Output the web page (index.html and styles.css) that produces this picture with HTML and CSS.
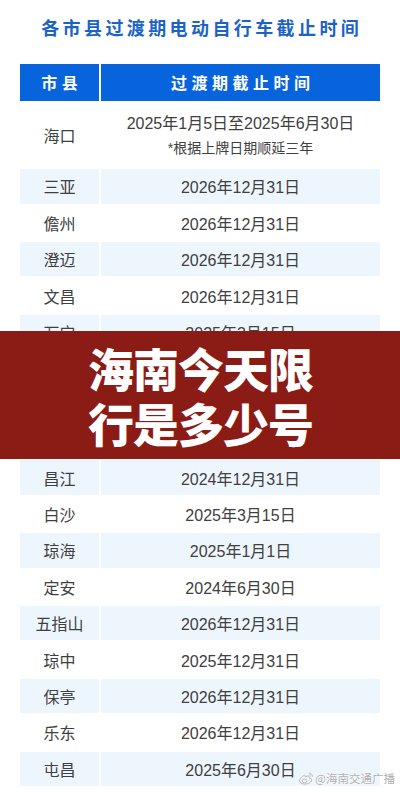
FILE: index.html
```html
<!DOCTYPE html>
<html lang="zh-CN">
<head>
<meta charset="utf-8">
<title>各市县过渡期电动自行车截止时间</title>
<link rel="stylesheet" href="styles.css">
</head>
<body>
<div class="page">
  <h1 class="title">各市县过渡期电动自行车截止时间</h1>
  <div class="table">
    <div class="row head">
      <div class="cell"><span class="sp">市县</span></div>
      <div class="cell"><span class="sp">过渡期截止时间</span></div>
    </div>
    <div class="row tall">
      <div class="cell">海口</div>
      <div class="cell stack">
        <span>2025年1月5日至2025年6月30日</span>
        <span class="note">*根据上牌日期顺延三年</span>
      </div>
    </div>
    <div class="row alt"><div class="cell">三亚</div><div class="cell">2026年12月31日</div></div>
    <div class="row"><div class="cell">儋州</div><div class="cell">2026年12月31日</div></div>
    <div class="row alt"><div class="cell">澄迈</div><div class="cell">2026年12月31日</div></div>
    <div class="row"><div class="cell">文昌</div><div class="cell">2026年12月31日</div></div>
    <div class="row alt"><div class="cell">万宁</div><div class="cell">2025年3月15日</div></div>
    <div class="row covered"><div class="cell">东方</div><div class="cell">2025年12月31日</div></div>
    <div class="row alt covered"><div class="cell">陵水</div><div class="cell">2025年12月31日</div></div>
    <div class="row covered"><div class="cell">临高</div><div class="cell">2025年12月31日</div></div>
    <div class="row alt"><div class="cell">昌江</div><div class="cell">2024年12月31日</div></div>
    <div class="row"><div class="cell">白沙</div><div class="cell">2025年3月15日</div></div>
    <div class="row alt"><div class="cell">琼海</div><div class="cell">2025年1月1日</div></div>
    <div class="row"><div class="cell">定安</div><div class="cell">2024年6月30日</div></div>
    <div class="row alt"><div class="cell">五指山</div><div class="cell">2026年12月31日</div></div>
    <div class="row"><div class="cell">琼中</div><div class="cell">2025年12月31日</div></div>
    <div class="row alt"><div class="cell">保亭</div><div class="cell">2026年12月31日</div></div>
    <div class="row"><div class="cell">乐东</div><div class="cell">2026年12月31日</div></div>
    <div class="row alt"><div class="cell">屯昌</div><div class="cell">2025年6月30日</div></div>
  </div>

  <div class="banner">
    <div class="banner-text">海南今天限<br>行是多少号</div>
  </div>

  <div class="watermark">
    <svg class="wb" width="16" height="13" viewBox="0 0 16 13">
      <path d="M6.5 3.2C3.6 4.6 1.2 7 1.6 9.1c.4 2.2 3.600 3.4 7 2.8 3.3-.6 5.4-2.6 4.9-4.4-.3-1.200-1.6-1.500-2.500-1.300.4-.9.3-1.7-.4-2-.9-.4-2.4.1-3.5.8.3-.9.2-1.9-.6-1.8z" fill="none" stroke="#b8b8b8" stroke-width="1"/>
      <ellipse cx="6.6" cy="8.9" rx="2.4" ry="1.8" fill="none" stroke="#b8b8b8" stroke-width="0.9"/>
      <path d="M11.2 1.2c1.8-.2 3.4 1.2 3.3 3.1M11.4 2.9c.8-.1 1.5.5 1.4 1.3" fill="none" stroke="#b8b8b8" stroke-width="0.9" stroke-linecap="round"/>
    </svg>
    <span>@海南交通广播</span>
  </div>
</div>
</body>
</html>
```

FILE: styles.css
```css
html, body {
  margin: 0;
  padding: 0;
  background: #ffffff;
}

body {
  font-family: "Liberation Sans", "Noto Sans CJK SC", sans-serif;
  color: #404040;
  overflow: hidden;
}

.page {
  position: relative;
  width: 400px;
  height: 790px;
  overflow: hidden;
}

.title {
  margin: 0;
  padding-top: 16px;
  box-sizing: border-box;
  line-height: 22px;
  height: 64px;
  text-align: center;
  font-size: 18px;
  font-weight: 700;
  letter-spacing: 3.4px;
  text-indent: 3.4px;
  color: #1b63c6;
  font-family: "Noto Sans CJK SC", sans-serif;
}

.table {
  margin: 0 20px;
  display: flex;
  flex-direction: column;
  gap: 2px;
}

.row {
  display: grid;
  grid-template-columns: 79px 1fr;
  column-gap: 2px;
  height: 34.4px;
}

.row.head {
  height: 36.7px;
}

.row.tall {
  height: 64.6px;
}

.row.covered .cell {
  color: transparent;
}

.cell {
  display: flex;
  align-items: center;
  justify-content: center;
  font-size: 16px;
  white-space: nowrap;
}

.row.head .cell {
  background: #0864dd;
  color: #ffffff;
  font-weight: 700;
  font-family: "Noto Sans CJK SC", sans-serif;
}

.sp {
  letter-spacing: 4.5px;
  margin-right: -4.5px;
}

.row.alt .cell {
  background: #eef6fd;
}

.stack {
  flex-direction: column;
  gap: 7px;
  padding-top: 2px;
}

.note {
  font-size: 14px;
  line-height: 16px;
}

.stack span:first-child {
  line-height: 18px;
}

.banner {
  position: absolute;
  left: 0;
  right: 0;
  top: 331px;
  height: 128px;
  background: #8b1b15;
  display: flex;
  align-items: center;
  justify-content: center;
}

.banner-text {
  color: #ffffff;
  font-family: "Noto Sans CJK SC", sans-serif;
  font-weight: 900;
  font-size: 46px;
  line-height: 55px;
  letter-spacing: -1px;
  text-align: center;
  padding-left: 1px;
}

.watermark {
  position: absolute;
  right: 5px;
  bottom: 4px;
  display: flex;
  align-items: center;
  gap: 1px;
  font-family: "Noto Sans CJK SC", sans-serif;
  font-size: 11.5px;
  color: #b0b0b0;
  text-shadow: 0 0 2px #ffffff, 0 0 1px #ffffff;
}

.wb {
  display: block;
}
```
